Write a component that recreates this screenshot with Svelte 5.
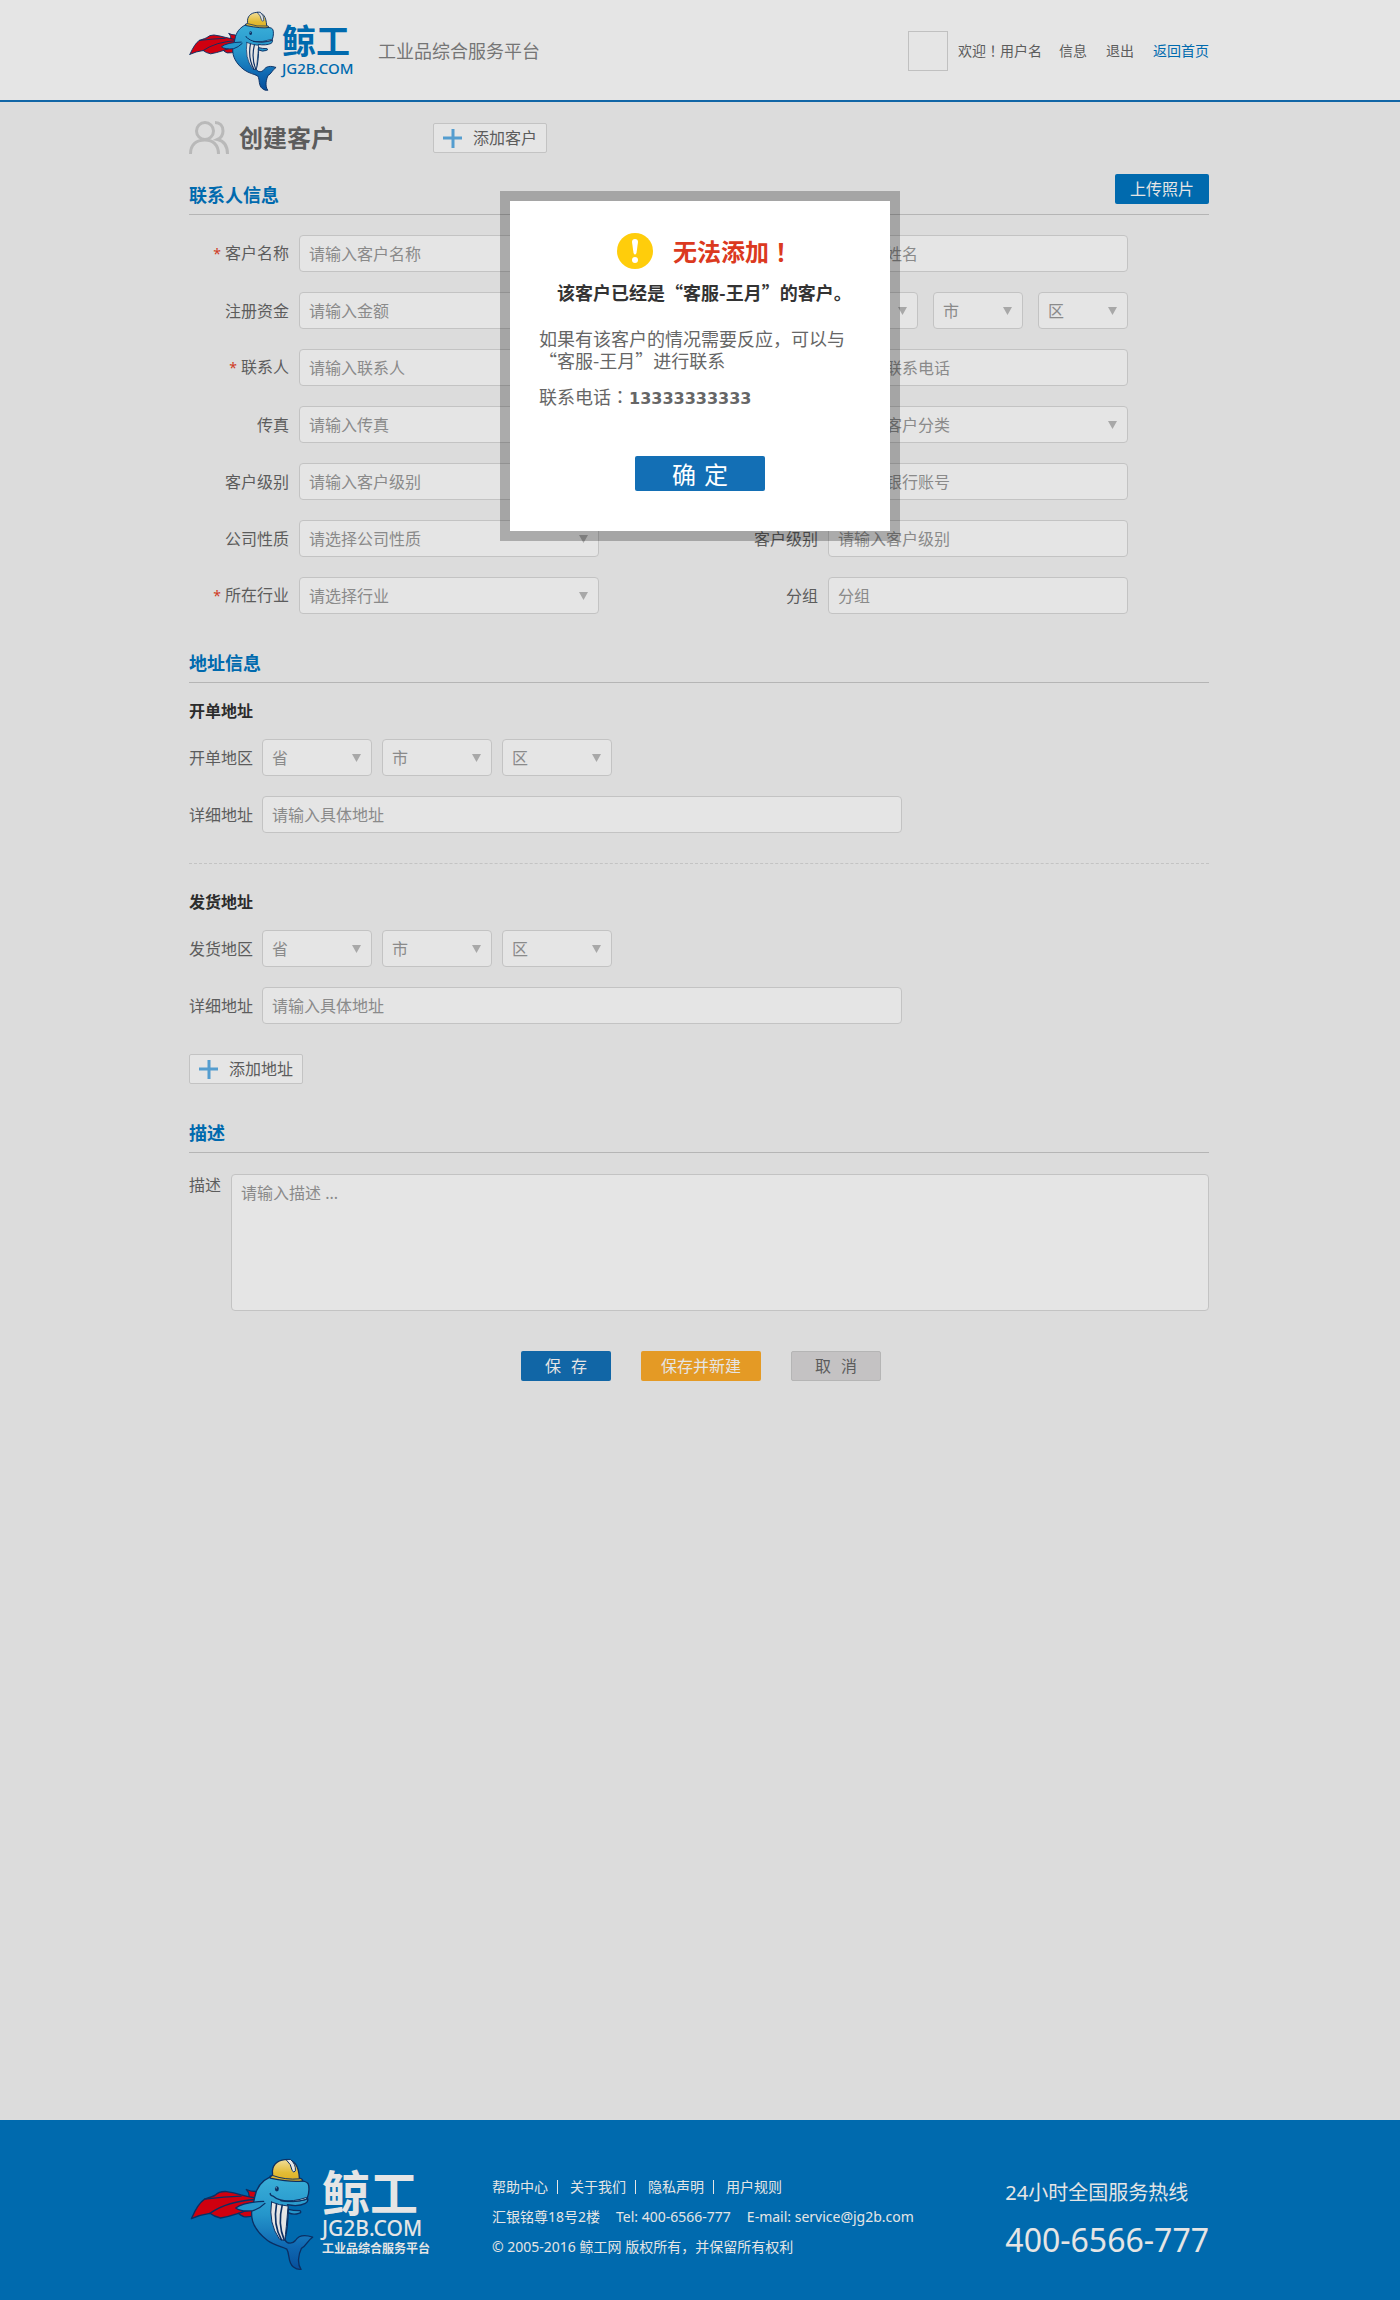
<script>
  const regions = ['省', '市', '区'];

  const contactFields = [
    { id: 'name', label: '客户名称', required: true, hint: '请输入客户名称' },
    { id: 'person', label: '姓名', hint: '请输入姓名' },
    { id: 'capital', label: '注册资金', hint: '请输入金额' },
    { id: 'area', label: '所在地区', kind: 'region' },
    { id: 'contact', label: '联系人', required: true, hint: '请输入联系人' },
    { id: 'phone', label: '联系电话', hint: '请输入联系电话' },
    { id: 'fax', label: '传真', hint: '请输入传真' },
    { id: 'category', label: '客户分类', kind: 'select', hint: '请选择客户分类' },
    { id: 'level', label: '客户级别', hint: '请输入客户级别' },
    { id: 'account', label: '银行账号', hint: '请输入银行账号' },
    { id: 'nature', label: '公司性质', kind: 'select', hint: '请选择公司性质' },
    { id: 'grade', label: '客户级别', hint: '请输入客户级别' },
    { id: 'industry', label: '所在行业', required: true, kind: 'select', hint: '请选择行业' },
    { id: 'group', label: '分组', hint: '分组' }
  ];

  const addresses = [
    { id: 'bill', title: '开单地址', area: '开单地区' },
    { id: 'ship', title: '发货地址', area: '发货地区' }
  ];
</script>

{#snippet whale(id)}
  <svg class="whale" viewBox="6 20 374 344" aria-hidden="true">
    <defs>
      <linearGradient id="{id}-body" x1="0" y1="0" x2="0" y2="1">
        <stop offset="0" stop-color="#3aaed8" />
        <stop offset="0.4" stop-color="#2596cb" />
        <stop offset="0.75" stop-color="#0f68b2" />
        <stop offset="1" stop-color="#07509c" />
      </linearGradient>
      <linearGradient id="{id}-hat" x1="0" y1="0" x2="0" y2="1">
        <stop offset="0" stop-color="#f0dd9a" />
        <stop offset="0.6" stop-color="#e3bc35" />
        <stop offset="1" stop-color="#dcae25" />
      </linearGradient>
    </defs>
    <g stroke="#0b2f63" stroke-width="4" stroke-linejoin="round" stroke-linecap="round">
      <path fill="#d0000f" d="M176 118 Q188 124 204 124 L206 146 L184 142 Q186 128 176 118Z" />
      <path fill="#d0000f" d="M10 206 Q30 160 50 147 Q78 138 82 135 Q92 124 112 124 Q140 128 160 134 Q190 142 232 148 L208 190 Q186 204 168 200 Q158 196 152 190 Q122 200 98 204 Q78 200 66 190 Q36 194 10 206Z" />
      <path fill="none" d="M66 190 Q120 152 208 148 M152 190 L180 180 M50 147 Q110 140 160 138" />
      <path fill="url(#{id}-body)" d="M248 80 C222 92 206 112 201 142 L192 186 C190 214 206 246 240 272 C262 288 284 290 298 298 C308 314 300 338 318 352 C326 358 332 360 341 359 C328 342 334 312 342 296 C356 290 360 272 376 262 C352 254 334 256 324 272 C316 282 300 284 292 270 C300 240 302 210 302 178 L300 164 C320 168 342 166 354 160 C362 156 362 148 360 143 C366 128 366 108 362 100 C356 92 346 92 336 92 Z" />
      <path fill="#e5e5e5" stroke-width="3" d="M252 156 Q242 220 276 268 L292 272 Q296 240 302 168 Q276 166 252 156Z" />
      <path fill="none" stroke-width="5" d="M267 162 Q256 224 282 270 M284 166 Q270 222 290 270" />
      <path fill="#2596cb" d="M228 154 Q166 156 144 174 Q158 186 196 182 Q216 176 232 160" />
      <path fill="#2596cb" d="M303 178 Q316 182 338 182 Q344 188 334 190 Q318 196 302 188Z" />
      <path fill="#e5e5e5" stroke-width="3" d="M280 152 Q316 160 358 148 L358 142 Q318 156 280 152Z" />
      <path fill="none" d="M248 130 Q248 136 256 138 Q274 154 310 154 Q342 154 360 146" />
      <path fill="url(#{id}-hat)" d="M248 78 Q256 78 255 70 C252 46 268 30 292 28 C322 26 334 48 336 84 Q346 86 346 92 Q318 98 248 84 Z" />
      <path fill="#e5e5e5" stroke-width="3" d="M296 28 Q312 42 314 60 Q318 70 324 62 Q326 42 310 28Z" />
      <path fill="none" stroke-width="3" d="M256 76 Q294 90 336 86" />
    </g>
    <ellipse cx="268" cy="116" rx="6" ry="8" fill="#0b2f63" />
    <circle cx="266" cy="113" r="2" fill="#9fd4ec" />
  </svg>
{/snippet}

{#snippet dropdown(id, text, name)}
  <span class="select">
    <select {id} aria-label={name}>
      <option>{text}</option>
    </select>
    <svg class="arrow" viewBox="0 0 9 8" aria-hidden="true"><path d="M0 0H9L4.500 8Z" /></svg>
  </span>
{/snippet}

{#snippet plus()}
  <svg class="plus" viewBox="0 0 20 20" aria-hidden="true"><path d="M10 1V20M0 10H19" /></svg>
{/snippet}

<div class="page">
  <header>
    <div class="wrap bar">
      <div class="brand">
        {@render whale('top')}
        <div class="wordmark">
          <strong>鲸工</strong>
          <span class="domain">JG2B.COM</span>
        </div>
      </div>
      <p class="tagline">工业品综合服务平台</p>
      <nav class="user">
        <span class="avatar"></span>
        <span class="hello">欢迎<span class="mid">！</span>用户名</span>
        <a href="#messages">信息</a>
        <a href="#logout">退出</a>
        <a class="home" href="#home">返回首页</a>
      </nav>
    </div>
  </header>

  <main class="wrap">
    <div class="title">
      <svg class="people" viewBox="0 0 40 33" aria-hidden="true">
        <circle cx="16" cy="10" r="8.500" />
        <path d="M1.500 33C1.500 23 8 19 16 19S29.500 24 29.500 33M26 1.500C31 1.500 34 5 34 10C34 14 32 17 28.500 18.500C35 20 38.500 25 38.500 33" />
      </svg>
      <h1>创建客户</h1>
      <button type="button" class="add">{@render plus()}添加客户</button>
    </div>

    <form onsubmit={(e) => e.preventDefault()}>
      <section>
        <div class="section-head">
          <h2>联系人信息</h2>
          <button type="button" class="btn upload">上传照片</button>
        </div>
        <div class="fields">
          {#each contactFields as f}
            <div class="field">
              <label for={f.id}>{#if f.required}<em>*</em>{/if}{f.label}</label>
              {#if f.kind === 'region'}
                <div class="regions">
                  {#each regions as r, i}
                    {@render dropdown(i ? `${f.id}-${i}` : f.id, r, r)}
                  {/each}
                </div>
              {:else if f.kind === 'select'}
                {@render dropdown(f.id, f.hint, f.label)}
              {:else}
                <input id={f.id} type="text" placeholder={f.hint} />
              {/if}
            </div>
          {/each}
        </div>
      </section>

      <section>
        <div class="section-head"><h2>地址信息</h2></div>
        {#each addresses as a}
          <div class="address">
            <h3>{a.title}</h3>
            <div class="line">
              <label for="{a.id}-0">{a.area}</label>
              {#each regions as r, i}
                {@render dropdown(`${a.id}-${i}`, r, r)}
              {/each}
            </div>
            <div class="line">
              <label for="{a.id}-detail">详细地址</label>
              <input id="{a.id}-detail" class="detail" type="text" placeholder="请输入具体地址" />
            </div>
          </div>
        {/each}
        <button type="button" class="add">{@render plus()}添加地址</button>
      </section>

      <section>
        <div class="section-head"><h2>描述</h2></div>
        <div class="describe">
          <label for="description">描述</label>
          <textarea id="description" placeholder="请输入描述 ..."></textarea>
        </div>
      </section>

      <div class="actions">
        <button type="submit" class="btn save"><span>保</span><span>存</span></button>
        <button type="button" class="btn again">保存并新建</button>
        <button type="button" class="btn cancel"><span>取</span><span>消</span></button>
      </div>
    </form>
  </main>

  <footer>
    <div class="wrap foot">
      <div class="brand large">
        {@render whale('foot')}
        <div class="wordmark">
          <strong>鲸工</strong>
          <span class="domain">JG2B.COM</span>
          <span class="slogan">工业品综合服务平台</span>
        </div>
      </div>
      <div class="info">
        <nav>
          <a href="#help">帮助中心</a><a href="#about">关于我们</a><a href="#privacy">隐私声明</a><a href="#rules">用户规则</a>
        </nav>
        <p class="contact"><span>汇银铭尊18号2楼</span><span>Tel: 400-6566-777</span><span>E-mail: service@jg2b.com</span></p>
        <p>© 2005-2016 鲸工网 版权所有，并保留所有权利</p>
      </div>
      <div class="hotline">
        <p>24小时全国服务热线</p>
        <strong>400-6566-777</strong>
      </div>
    </div>
  </footer>

  <div class="dialog" role="alertdialog" aria-labelledby="alert-title" aria-describedby="alert-text">
    <div class="alert-head">
      <svg class="warn" viewBox="0 0 36 36" aria-hidden="true">
        <circle cx="18" cy="18" r="18" fill="#ffcd0b" />
        <path d="M15 9Q15 6 18 6T21 9L19.500 20Q18 23 16.500 20Z" fill="#fff" />
        <circle cx="18" cy="27" r="3" fill="#fff" />
      </svg>
      <h2 id="alert-title">无法添加<span class="mid">！</span></h2>
    </div>
    <p class="lead">该客户已经是“客服-王月”的客户。</p>
    <p id="alert-text">如果有该客户的情况需要反应，可以与<br />“客服-王月”进行联系</p>
    <p class="tel">联系电话<span class="mid">：</span><b>13333333333</b></p>
    <button type="button" class="btn ok"><span>确</span><span>定</span></button>
  </div>
</div>

<style>
  :global(body) {
    margin: 0;
    background: #dcdcdc;
  }

  h1,
  h2,
  h3,
  p {
    margin: 0;
  }

  input,
  select,
  textarea,
  button {
    box-sizing: border-box;
    font: inherit;
  }

  a {
    color: inherit;
    text-decoration: none;
  }

  .page {
    position: relative;
    display: flex;
    flex-direction: column;
    min-height: 100vh;
    font: 16px/24px 'Noto Sans', 'Noto Sans CJK SC', sans-serif;
    color: #5c5c5c;
  }

  .mid {
    font-family: 'Noto Sans CJK TC', sans-serif;
  }

  .wrap {
    box-sizing: border-box;
    width: 100%;
    max-width: 1022px;
    margin: 0 auto;
    padding-right: 2px;
  }

  /* header */
  header {
    background: #e5e5e5;
    border-bottom: 2px solid #1166a6;
  }

  .bar {
    display: flex;
    align-items: center;
    height: 100px;
    padding-top: 1px;
  }

  .brand {
    display: flex;
    align-items: center;
    gap: 5px;
    color: #006aae;
  }

  .whale {
    width: 88px;
    height: 82px;
  }

  .wordmark {
    display: flex;
    flex-direction: column;
    width: 77px;
  }

  .wordmark strong {
    font-size: 34px;
    font-weight: 700;
    line-height: 34px;
  }

  .domain {
    font-size: 15px;
    font-weight: 500;
    line-height: 20px;
  }

  .tagline {
    margin-left: 19px;
    font-size: 18px;
    color: #757575;
  }

  .user {
    display: flex;
    align-items: center;
    gap: 19px;
    margin-left: auto;
    font-size: 14px;
  }

  .avatar {
    width: 38px;
    height: 38px;
    border: 1px solid #c0c0c0;
  }

  .hello {
    margin: 0 -2px 0 -9px;
  }

  .home {
    color: #006aae;
  }

  /* page title */
  .title {
    display: flex;
    align-items: center;
    padding: 19px 0 1px;
  }

  .people {
    width: 40px;
    height: 33px;
    fill: none;
    stroke: #b9b9b9;
    stroke-width: 3;
  }

  h1 {
    margin: 0 98px 0 10px;
    font-size: 24px;
    line-height: 32px;
  }

  .add {
    display: flex;
    align-items: center;
    gap: 10px;
    height: 30px;
    padding: 0 9px;
    border: 1px solid #c3c3c3;
    border-radius: 2px;
    background: #e5e5e5;
    color: #5c5c5c;
  }

  .plus {
    width: 20px;
    height: 20px;
    stroke: #549dcf;
    stroke-width: 3;
  }

  /* sections */
  .section-head {
    display: flex;
    align-items: center;
    justify-content: space-between;
    height: 40px;
    border-bottom: 1px solid #b5b5b5;
  }

  .section-head h2 {
    padding-top: 2px;
    font-size: 18px;
    color: #006aae;
  }

  form {
    padding-top: 19px;
  }

  section + section {
    margin-top: 28px;
  }

  .btn {
    display: flex;
    align-items: center;
    justify-content: center;
    gap: 10px;
    height: 30px;
    padding: 0;
    border: 0;
    border-radius: 2px;
    color: #e5e5e5;
  }

  .upload {
    width: 94px;
    margin-bottom: 10px;
    background: #006aae;
  }

  .fields {
    display: grid;
    grid-template-columns: 1fr 1fr;
    gap: 20px 119px;
    padding: 20px 81px 0 0;
  }

  .field {
    display: flex;
    align-items: center;
    gap: 10px;
  }

  .field label {
    flex: 0 0 100px;
    text-align: right;
  }

  em {
    margin-right: 4px;
    font-size: 14px;
    font-style: normal;
    color: #cf3a24;
  }

  .field > :not(label) {
    flex: 1;
    min-width: 0;
  }

  input,
  select {
    width: 100%;
    height: 37px;
    padding: 0 9px;
    border: 1px solid #c3c3c3;
    border-radius: 4px;
    background: #e5e5e5;
    color: #8a8a8a;
  }

  select {
    appearance: none;
    grid-area: 1 / 1;
  }

  ::placeholder {
    color: #8a8a8a;
    opacity: 1;
  }

  .select {
    display: grid;
    align-items: center;
  }

  .arrow {
    grid-area: 1 / 1;
    justify-self: end;
    width: 9px;
    height: 8px;
    margin-right: 11px;
    fill: #a8a8a8;
    pointer-events: none;
  }

  .regions {
    display: grid;
    grid-template-columns: repeat(3, 1fr);
    gap: 15px;
  }

  /* addresses */
  .address {
    padding-bottom: 30px;
  }

  .address + .address {
    padding-top: 26px;
    border-top: 1px dashed #c3c3c3;
  }

  h3 {
    padding-top: 16px;
    font-size: 16px;
    color: #2c2c2c;
  }

  .address + .address h3 {
    padding-top: 0;
  }

  .line {
    display: flex;
    align-items: center;
    gap: 10px;
    margin-top: 20px;
  }

  .line label {
    width: 63px;
    white-space: nowrap;
  }

  h3 + .line {
    margin-top: 16px;
  }

  .line .select {
    width: 110px;
  }

  .detail {
    width: 640px;
  }

  /* description */
  .describe {
    display: flex;
    gap: 10px;
    padding-top: 21px;
  }

  .describe label {
    line-height: 22px;
  }

  textarea {
    flex: 1;
    height: 137px;
    padding: 6px 9px;
    border: 1px solid #c3c3c3;
    border-radius: 4px;
    background: #e5e5e5;
    resize: none;
  }

  .actions {
    display: flex;
    justify-content: center;
    gap: 30px;
    padding: 40px 0 40px 4px;
  }

  .save {
    width: 90px;
    background: #1166a6;
  }

  .again {
    width: 120px;
    background: #e49a25;
  }

  .cancel {
    width: 90px;
    border: 1px solid #b5b5b5;
    background: #c4c2c3;
    color: #5c5c5c;
  }

  /* footer */
  footer {
    margin-top: auto;
    background: #006aae;
    color: #e5e5e5;
    font-size: 14px;
  }

  .foot {
    display: flex;
    align-items: center;
    height: 180px;
  }

  .large {
    gap: 8px;
    padding: 8px 0 0 1px;
    color: #e5e5e5;
  }

  .large .whale {
    width: 124px;
    height: 114px;
  }

  .large .wordmark {
    width: 110px;
  }

  .large strong {
    font-size: 48px;
    line-height: 42px;
  }

  .large .domain {
    font-size: 21px;
    line-height: 28px;
  }

  .slogan {
    font-size: 12px;
    font-weight: 700;
    line-height: 14px;
  }

  .info {
    display: grid;
    gap: 6px;
    margin: 14px auto 0 60px;
  }

  .info a + a::before {
    content: '';
    display: inline-block;
    width: 1px;
    height: 14px;
    margin: 0 12px 0 9px;
    background: #e5e5e5;
    vertical-align: -2px;
  }

  .contact {
    display: flex;
    gap: 16px;
  }

  .hotline {
    padding-top: 20px;
  }

  .hotline p {
    font-size: 20px;
    line-height: 30px;
  }

  .hotline strong {
    display: block;
    margin-top: 10px;
    font-size: 32px;
    font-weight: 400;
    line-height: 44px;
  }

  /* dialog floating over the form */
  .dialog {
    position: absolute;
    top: 191px;
    left: 0;
    right: 0;
    box-sizing: border-box;
    width: 400px;
    margin: 0 auto;
    padding: 32px 29px 40px;
    border: 10px solid rgba(0, 0, 0, 0.25);
    background: #fff;
    background-clip: padding-box;
    font-family: 'Noto Sans CJK SC', sans-serif;
    font-size: 18px;
    line-height: 22px;
    color: #666;
  }

  .alert-head {
    display: flex;
    align-items: center;
    gap: 20px;
    padding-left: 78px;
  }

  .alert-head h2 {
    font-size: 24px;
    line-height: 36px;
    color: #db3920;
  }

  .warn {
    width: 36px;
    height: 36px;
  }

  .lead {
    margin: 12px 0 24px;
    padding-left: 18px;
    font-weight: 700;
    color: #333;
    white-space: nowrap;
  }

  #alert-text {
    white-space: nowrap;
  }

  .tel {
    height: 22px;
    margin: 14px 0 49px;
  }

  .dialog b {
    font-family: 'DejaVu Sans', sans-serif;
    font-size: 16px;
  }

  .ok {
    gap: 8px;
    width: 130px;
    height: 35px;
    margin: 0 auto;
    background: #136fb5;
    color: #fff;
    font-size: 24px;
  }
</style>
